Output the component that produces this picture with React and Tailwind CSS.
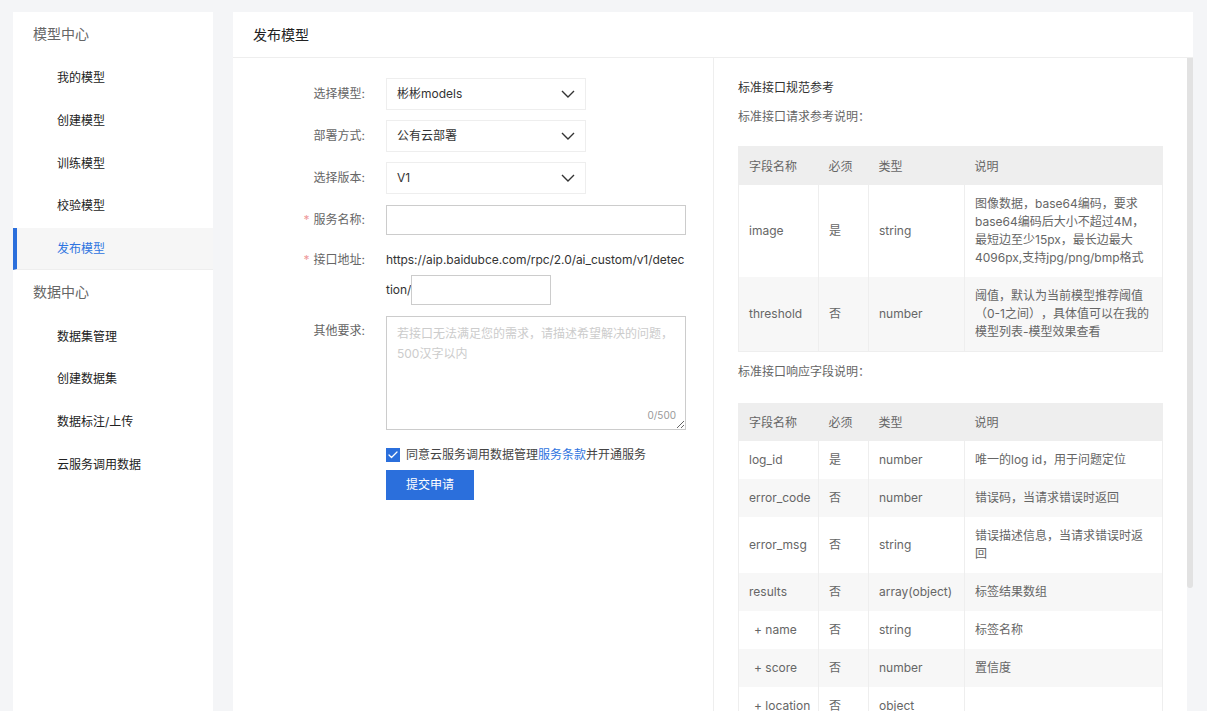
import { Check } from "lucide-react";

const menuGroups = [
  { title: "模型中心", items: ["我的模型", "创建模型", "训练模型", "校验模型", "发布模型"] },
  { title: "数据中心", items: ["数据集管理", "创建数据集", "数据标注/上传", "云服务调用数据"] },
];

const requestRows = [
  {
    name: "image",
    must: "是",
    type: "string",
    desc: "图像数据，base64编码，要求base64编码后大小不超过4M，最短边至少15px，最长边最大4096px,支持jpg/png/bmp格式",
  },
  {
    name: "threshold",
    must: "否",
    type: "number",
    desc: "阈值，默认为当前模型推荐阈值（0-1之间），具体值可以在我的模型列表-模型效果查看",
  },
];

const responseRows = [
  { name: "log_id", must: "是", type: "number", desc: "唯一的log id，用于问题定位" },
  { name: "error_code", must: "否", type: "number", desc: "错误码，当请求错误时返回" },
  { name: "error_msg", must: "否", type: "string", desc: "错误描述信息，当请求错误时返回" },
  { name: "results", must: "否", type: "array(object)", desc: "标签结果数组" },
  { name: "+ name", must: "否", type: "string", desc: "标签名称", sub: true },
  { name: "+ score", must: "否", type: "number", desc: "置信度", sub: true },
  { name: "+ location", must: "否", type: "object", desc: "", sub: true },
];

const Sidebar = () => (
  <div className="w-[200px] shrink-0 bg-white h-[699px] overflow-hidden">
    {menuGroups.map((group) => (
      <div key={group.title}>
        <div className="h-[45px] pl-5 pb-px flex items-center text-sm text-[#666]">{group.title}</div>
        {group.items.map((item) => {
          const active = item === "发布模型";
          return (
            <div
              key={item}
              className={
                active
                  ? "h-[42.67px] pl-10 pt-px flex items-center text-xs text-[#2e74e0] bg-[#f6f6f6] border-l-4 border-[#2b6fdc] border-b border-b-[#eeeeee]"
                  : "h-[42.67px] pl-11 flex items-center text-xs text-[#222]"
              }
            >
              {item}
            </div>
          );
        })}
      </div>
    ))}
  </div>
);

const Label = ({ required, children }) => (
  <div className="w-[133px] shrink-0 text-right text-xs text-[#666] leading-[30px] pr-px">
    {required && <span className="text-[#ee9a9a] mr-1">*</span>}
    {children}:
  </div>
);

const FakeSelect = ({ value }) => (
  <div className="w-[200px] h-8 border border-[#eeeeee] flex items-center justify-between pl-2.5 pr-2.5 text-xs text-[#333]">
    <span>{value}</span>
    <svg width="14" height="8" viewBox="0 0 14 8" fill="none" stroke="#333" strokeWidth="1.4">
      <path d="M1 1l6 6 6-6" />
    </svg>
  </div>
);

const SpecTable = ({ rows }) => (
  <table className="w-[425px] table-fixed border-collapse text-xs text-[#666] leading-[18px] border border-[#eeeeee]">
    <colgroup>
      <col className="w-[80px]" />
      <col className="w-[50px]" />
      <col className="w-[96px]" />
      <col />
    </colgroup>
    <thead>
      <tr className="bg-[#eeeeee] h-[38px] text-left">
        <th className="font-normal pl-2.5 pt-[2px]">字段名称</th>
        <th className="font-normal pl-2.5 pt-[2px]">必须</th>
        <th className="font-normal pl-2.5 pt-[2px]">类型</th>
        <th className="font-normal pl-2.5 pt-[2px]">说明</th>
      </tr>
    </thead>
    <tbody>
      {rows.map((row, i) => (
        <tr key={row.name} className={i % 2 === 1 ? "bg-[#f7f7f7]" : "bg-white"}>
          <td className={row.sub ? "border-r border-[#eeeeee] pl-[15px] h-[38px]" : "border-r border-[#eeeeee] pl-2.5 h-[38px]"}>
            {row.name}
          </td>
          <td className="border-r border-[#eeeeee] pl-2.5">{row.must}</td>
          <td className="border-r border-[#eeeeee] pl-2.5 whitespace-nowrap">{row.type}</td>
          <td className="px-2.5 py-2.5">{row.desc}</td>
        </tr>
      ))}
    </tbody>
  </table>
);

const App = () => {
  return (
    <div className="h-[711px] overflow-hidden bg-[#f4f5f7] pt-3 pl-[13px] pr-[14px] flex gap-5 font-['Inter','Noto_Sans_CJK_SC',sans-serif] [text-spacing-trim:space-all]">
      <Sidebar />
      <div className="flex-1 bg-white h-[699px] flex flex-col">
        <div className="h-[46px] shrink-0 border-b border-[#eeeeee] pl-5 flex items-center text-sm text-[#222]">
          发布模型
        </div>
        <div className="flex flex-1 min-h-0">
          {/* form */}
          <div className="w-[481px] shrink-0 border-r border-[#eeeeee] pt-5 flex flex-col">
            <div className="flex gap-5 h-8 items-center">
              <Label>选择模型</Label>
              <FakeSelect value="彬彬models" />
            </div>
            <div className="flex gap-5 h-8 items-center mt-2.5">
              <Label>部署方式</Label>
              <FakeSelect value="公有云部署" />
            </div>
            <div className="flex gap-5 h-8 items-center mt-2.5">
              <Label>选择版本</Label>
              <FakeSelect value="V1" />
            </div>
            <div className="flex gap-5 items-center mt-[11px]">
              <Label required>服务名称</Label>
              <input className="w-[300px] h-[30px] border border-[#cccccc] outline-none" />
            </div>
            <div className="flex gap-5 mt-2.5">
              <Label required>接口地址</Label>
              <div className="w-[300px] text-xs text-[#333] leading-[30px] break-all tracking-[-0.05px]">
                https://aip.baidubce.com/rpc/2.0/ai_custom/v1/detection/
                <input className="w-[140px] h-[30px] border border-[#cccccc] outline-none align-top" />
              </div>
            </div>
            <div className="flex gap-5 mt-[11px]">
              <Label>其他要求</Label>
              <div className="relative w-[300px] h-[114px]">
                <textarea
                  className="block w-[300px] h-[114px] border border-[#cccccc] outline-none px-2.5 pt-[7px] pb-1.5 text-xs leading-5 placeholder:text-[#cccccc]"
                  placeholder="若接口无法满足您的需求，请描述希望解决的问题，500汉字以内"
                />
                <span className="absolute right-[10px] bottom-[9px] text-[10px] leading-3 text-[#999]">0/500</span>
              </div>
            </div>
            <div className="flex gap-[6px] items-center mt-[17px] ml-[153px] text-xs text-[#444]">
              <span className="w-3.5 h-3.5 bg-[#2b6fdc] flex items-center justify-center">
                <Check size={12} strokeWidth={2.5} className="text-white" />
              </span>
              <span>
                同意云服务调用数据管理<span className="text-[#2e74e0]">服务条款</span>并开通服务
              </span>
            </div>
            <button className="w-[88px] h-[30px] mt-[7px] ml-[153px] bg-[#2b6fdc] text-white text-xs">提交申请</button>
          </div>
          {/* reference */}
          <div className="relative flex-1 min-w-0 overflow-hidden pl-6 pt-[21px]">
            <div className="text-xs leading-[18px] text-[#333]">标准接口规范参考</div>
            <div className="text-xs leading-[18px] text-[#666] mt-[11px]">标准接口请求参考说明：</div>
            <div className="mt-[20px]">
              <SpecTable rows={requestRows} />
            </div>
            <div className="text-xs leading-[18px] text-[#666] mt-[11px]">标准接口响应字段说明：</div>
            <div className="mt-[22px]">
              <SpecTable rows={responseRows} />
            </div>
            <div className="absolute top-0 right-0 w-1.5 h-full bg-[#f4f5f7]">
              <div className="w-1.5 h-[530px] bg-[#e2e2e2] rounded-b-sm" />
            </div>
          </div>
        </div>
      </div>
    </div>
  );
};

export default App;
